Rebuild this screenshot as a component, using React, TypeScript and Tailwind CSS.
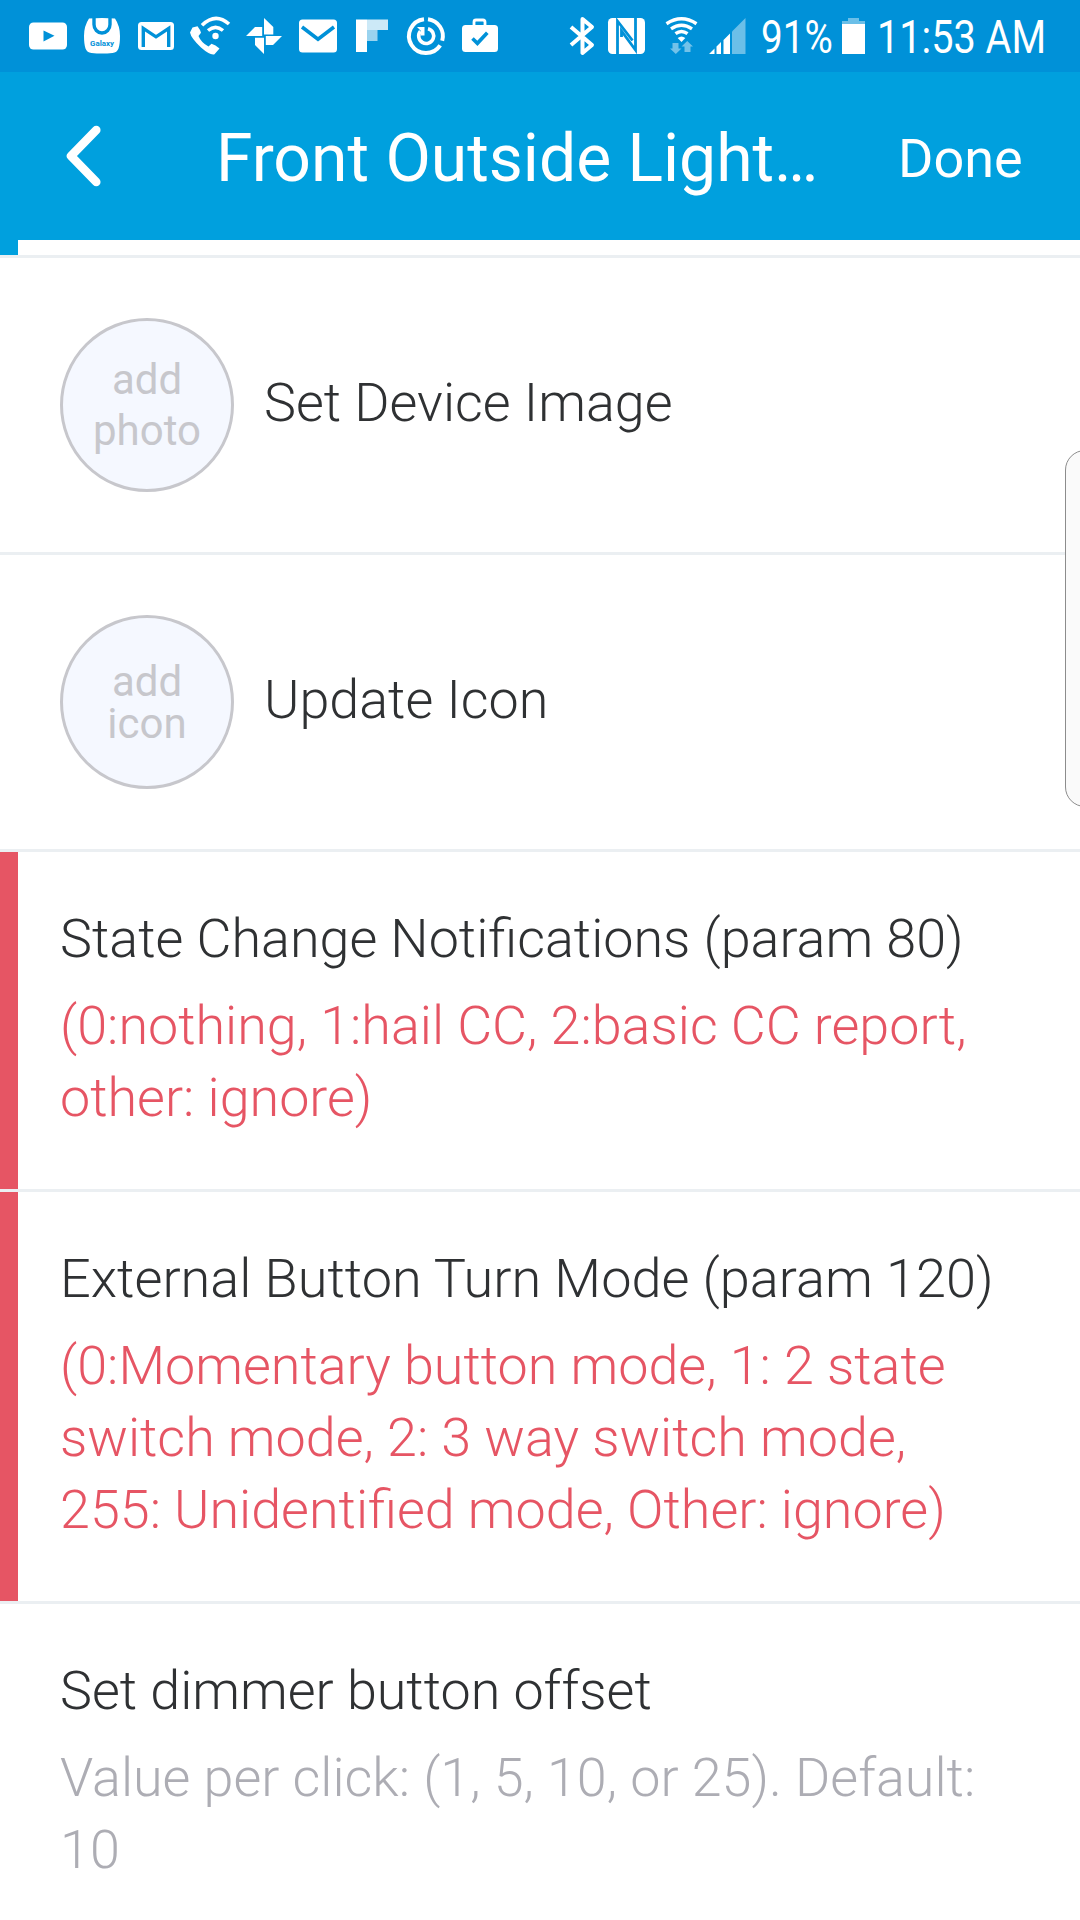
import React from "react";

type RowProps = { title: string; detail: string; alert?: boolean; wide?: boolean; className: string };

function Glyph({ w = 54, children }: { w?: number; children: React.ReactNode }) {
  return (
    <svg
      width={w}
      height={40}
      viewBox={`${-w / 2} -20 ${w} 40`}
      fill="#fff"
      className="block shrink-0"
    >
      {children}
    </svg>
  );
}

const BLUE = "#0091d8";

function StatusBar() {
  return (
    <div className="flex h-[72px] items-center bg-[#0091d8] pl-[21px] text-white">
      <Glyph>
        <rect x="-19" y="-13.5" width="38" height="27" rx="4.5" />
        <path d="M-4.5 -5.5 L6.5 -0.3 L-4.5 5.5 Z" fill={BLUE} />
      </Glyph>
      <Glyph>
        <path d="M-13 -17.5 Q0 -18.6 13 -17.5 Q18 -10 18 0 Q18 8 16.5 12.5 Q15 16.5 10.5 17 Q0 18.2 -10.5 17 Q-15 16.5 -16.5 12.5 Q-18 8 -18 0 Q-18 -10 -13 -17.5 Z" />
        <path d="M-8 -18 V-11.5 A8 8.5 0 0 0 8 -11.5 V-18" fill="none" stroke={BLUE} strokeWidth="3.4" />
        <text x="0" y="10" textAnchor="middle" textLength="24" lengthAdjust="spacingAndGlyphs" fontSize="8" fontWeight="700" fontFamily="Roboto, sans-serif" fill={BLUE}>
          Galaxy
        </text>
      </Glyph>
      <Glyph>
        <rect x="-18" y="-14" width="36" height="28" rx="3.5" />
        <path d="M-12.7 11 V-7.6 L0 0.8 L12.7 -7.6 V11" fill="none" stroke={BLUE} strokeWidth="3.4" />
      </Glyph>
      <Glyph>
        <path d="M-17.5 -8.5 L-12.5 -9.8 Q-9.5 -6 -9 -3.2 L-11.5 0 Q-9 6.5 -1.5 10.5 L1.5 7.8 Q5.5 9 9.5 12.5 L4.5 18.2 Q0 19.5 -9 11.5 Q-19 2 -20 -3.5 Z" />
        <circle cx="5.5" cy="0" r="3.2" />
        <path d="M-2 -5.5 Q5.5 -11.8 13 -5.5" fill="none" stroke="#fff" strokeWidth="3.5" />
        <path d="M-8 -10.8 Q5.5 -24 19 -12" fill="none" stroke="#fff" strokeWidth="3.6" />
      </Glyph>
      <Glyph>
        <path d="M0 -18 L9.3 -9 V-1.5 H0 Z M18 0 L9 9 H1.8 V0 Z M0 18 L-9 9 V1.8 H0 Z M-18 0 L-9 -9 H-1.8 V0 Z" />
      </Glyph>
      <Glyph>
        <rect x="-19" y="-16.5" width="38" height="33" rx="3.5" />
        <path d="M-16 -9 L0 3.2 L16 -9" fill="none" stroke={BLUE} strokeWidth="3.6" />
      </Glyph>
      <Glyph>
        <rect x="-16" y="-16.5" width="11" height="32.5" />
        <rect x="-5" y="-16.5" width="21" height="10.5" fillOpacity="0.8" />
        <rect x="-5" y="-6" width="10.5" height="11" fillOpacity="0.6" />
      </Glyph>
      <Glyph>
        <g fill="none" stroke="#fff">
          <path d="M2 -16.8 A17 17 0 0 1 16.2 4.8 M14.2 9.4 A17 17 0 1 1 -2 -16.8" strokeWidth="4" />
          <path d="M2 -7.3 A7.5 7.5 0 1 1 -5.6 -4.8" strokeWidth="3.6" />
        </g>
        <path d="M-9 -9 H-1.5 V-0.5 H-5 V-5 Z" />
      </Glyph>
      <Glyph>
        <rect x="-18" y="-11" width="36" height="27" rx="3.5" />
        <path d="M-6 -10 V-14 Q-6 -16 -4 -16 H3 Q5 -16 5 -14 V-10" fill="none" stroke="#fff" strokeWidth="2.8" />
        <path d="M-7.5 2.5 L-2.6 7.3 L7.3 -3.3" fill="none" stroke={BLUE} strokeWidth="3.6" />
      </Glyph>

      <div className="ml-[56px] flex items-center">
        <Glyph w={37}>
          <path d="M-10.5 -9 L10.5 9 L1 17 V-17 L10.5 -9 L-10.5 9" fill="none" stroke="#fff" strokeWidth="4" strokeLinejoin="round" />
        </Glyph>
        <div className="ml-[6px]">
          <Glyph w={41}>
            <rect x="-18.5" y="-18" width="37" height="36" rx="4.5" />
            <path d="M-9 18 V-15 L6 4.5 M-5 1 V-5 L9 14 V-18" stroke={BLUE} strokeWidth="2.8" fill="none" />
          </Glyph>
        </div>
        <div className="ml-[16px]">
          <Glyph w={37}>
            <g fill="none" stroke="#fff" strokeWidth="3.4">
              <path d="M-15 -12.3 Q0 -22 15 -12.3" />
              <path d="M-10.5 -7.2 Q0 -14.5 10.5 -7.2" />
              <path d="M-6 -2.3 Q0 -6.8 6 -2.3" />
            </g>
            <path d="M-3.8 2 Q0 -1 3.8 2 L0 6 Z" />
            <path d="M-9 7 H-3 V12.5 H0 L-5.7 18 L-11.5 12.5 H-9 Z M3 16 V10.5 H0 L5.7 5 L11.5 10.5 H9 V16 Z" fillOpacity="0.45" />
          </Glyph>
        </div>
        <div className="ml-[9px]">
          <Glyph w={37}>
            <path d="M-18.5 18 L-13 12.5 V18 Z M-11 18 V10.5 L-6.5 6 V18 Z M-4 18 V4 L2.5 -2.5 V18 Z" />
            <path d="M4.5 18 V-4.5 L18 -18 V18 Z" fillOpacity="0.42" />
          </Glyph>
        </div>
      </div>
      <div className="ml-[15px] w-[71px] text-[46px] leading-[72px] whitespace-nowrap">
        <div className="origin-left scale-x-[0.84] pt-[2px]">91%</div>
      </div>
      <div className="ml-[8px]">
        <Glyph w={27}>
          <path d="M-5.5 -18 H5.5 V-15 H11.5 V-12 H-11.5 V-15 H-5.5 Z" fillOpacity="0.42" />
          <rect x="-11.5" y="-12" width="23" height="30" />
        </Glyph>
      </div>
      <div className="ml-[10px] w-[180px] text-[46px] leading-[72px] whitespace-nowrap">
        <div className="origin-left scale-x-[0.862] pt-[2px]">11:53 AM</div>
      </div>
    </div>
  );
}

function Header() {
  return (
    <header className="flex h-[168px] items-center bg-[#00a0de] text-white">
      <svg width="44" height="70" viewBox="0 0 44 70" className="ml-[62px] block shrink-0">
        <path d="M34.3 9 L9 35 L34.3 61" fill="none" stroke="#fff" strokeWidth="8.5" strokeLinecap="round" strokeLinejoin="round" />
      </svg>
      <h1 className="ml-[110px] w-[650px] shrink-0 pt-[5px] text-[66px] leading-[80px] whitespace-nowrap">
        Front Outside Light…
      </h1>
      <button className="ml-[32px] pt-[5px] text-[54px] leading-[64px]">Done</button>
    </header>
  );
}

function ImageRow({ lines, label, tight }: { lines: [string, string]; label: string; tight?: boolean }) {
  return (
    <div className="flex h-[297px] items-center border-b-[3px] border-[#ebeff2] pl-[60px]">
      <div
        className={`flex size-[174px] flex-col items-center justify-center rounded-full border-[3px] border-[#c7c7cc] bg-[#f5f8ff] text-[42px] text-[#c7c7cc] ${tight ? "pt-[1px] leading-[42px]" : "leading-[51px]"}`}
      >
        <span>{lines[0]}</span>
        <span>{lines[1]}</span>
      </div>
      <span className="ml-[30px] pb-[5px] text-[53.87px] leading-[64px] font-light">{label}</span>
    </div>
  );
}

function ParamRow({ title, detail, alert, wide, className }: RowProps) {
  return (
    <div className={`flex border-b-[3px] border-[#ebeff2] ${className}`}>
      <div className={`w-[18px] shrink-0 ${alert ? "bg-[#e65564]" : ""}`} />
      <div className="ml-[42px] w-[960px] pt-[55px] text-[53.87px] font-light">
        <div className={`leading-[64px] ${wide ? "text-[54.06px]" : ""}`}>{title}</div>
        <div className={`mt-[19px] leading-[72px] ${alert ? "text-[#e65564]" : "text-[#adadb4]"}`}>{detail}</div>
      </div>
    </div>
  );
}

export default function App() {
  return (
    <div className="relative h-[1920px] w-[1080px] overflow-hidden bg-white font-['Roboto',sans-serif] text-[#2f3133]">
      <StatusBar />
      <Header />
      <div className="h-[18px] border-b-[3px] border-[#ebeff2]">
        <div className="h-[15px] w-[18px] bg-[#00a0de]" />
      </div>
      <ImageRow lines={["add", "photo"]} label="Set Device Image" />
      <ImageRow tight lines={["add", "icon"]} label="Update Icon" />
      <ParamRow
        className="h-[340px]"
        alert
        title="State Change Notifications (param 80)"
        detail="(0:nothing, 1:hail CC, 2:basic CC report, other: ignore)"
      />
      <ParamRow
        className="h-[412px]"
        alert
        wide
        title="External Button Turn Mode (param 120)"
        detail="(0:Momentary button mode, 1: 2 state switch mode, 2: 3 way switch mode, 255: Unidentified mode, Other: ignore)"
      />
      <ParamRow
        className="h-[340px]"
        title="Set dimmer button offset"
        detail="Value per click: (1, 5, 10, or 25). Default: 10"
      />
      <div className="absolute top-[450px] left-[1065px] h-[357px] w-[40px] rounded-[20px] border-[1.5px] border-[#8c8c8c] bg-[#fafafa]" />
    </div>
  );
}
